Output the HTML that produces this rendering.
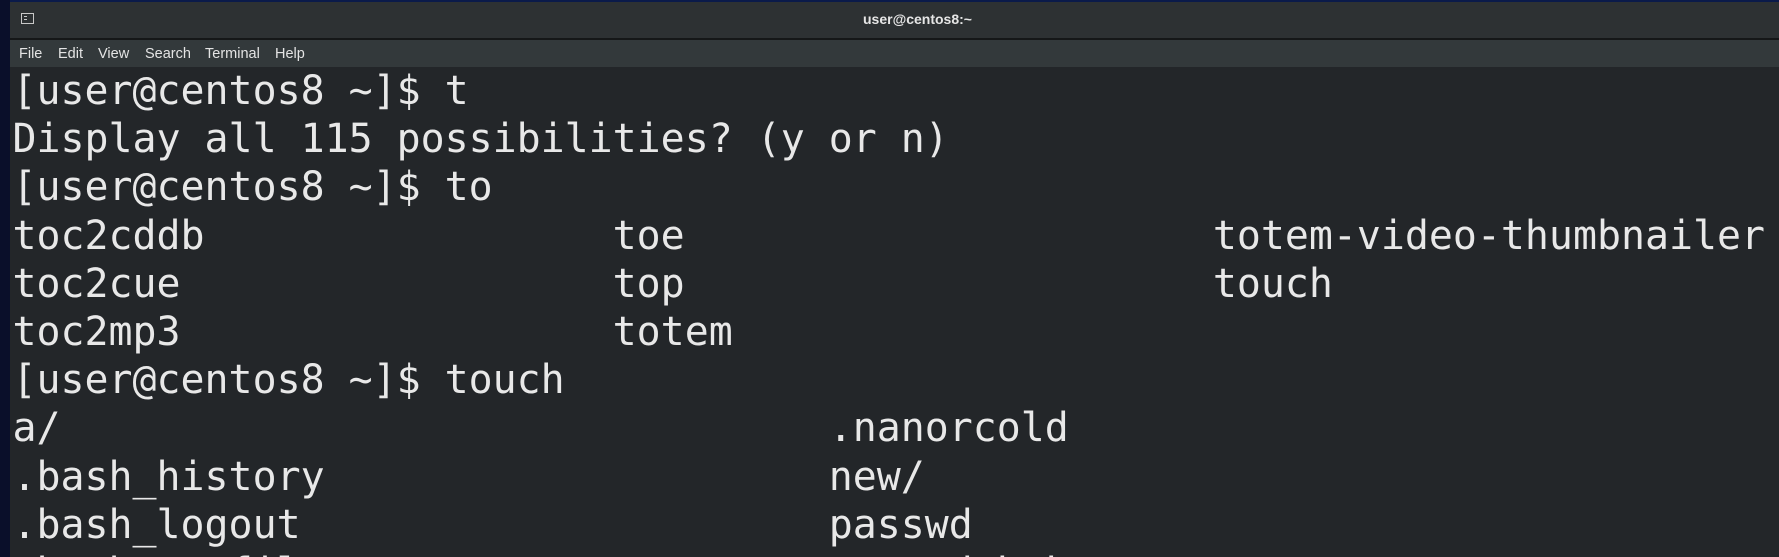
<!DOCTYPE html>
<html><head><meta charset="utf-8"><style>
html,body{margin:0;padding:0;width:1779px;height:557px;overflow:hidden;background:#232629;}
.strip{position:absolute;left:0;top:0;height:557px;width:10px;background:#0a0f2a;}
.topstrip{position:absolute;left:0;top:0;width:1779px;height:2px;background:#0a1a4a;}
.win{position:absolute;left:10px;top:2px;right:0;height:555px;background:#232629;overflow:hidden;}
.title{position:absolute;left:0;right:0;top:0;height:36px;background:#2d3133;border-bottom:2px solid #151718;}
.title .t{position:absolute;left:42px;right:0;top:9px;text-align:center;font:bold 14px "Liberation Sans",sans-serif;color:#e6e6e6;padding-left:4px;}
.icon{position:absolute;left:11px;top:11px;width:13px;height:11px;border:1px solid #c8c8c8;box-sizing:border-box;}
.icon:after{content:"";position:absolute;left:2px;top:2px;width:3px;height:1px;background:#c8c8c8;box-shadow:0 3px 0 #c8c8c8;}
.menu{position:absolute;left:0;right:0;top:38px;height:27px;background:#33393b;font:14.5px "Liberation Sans",sans-serif;color:#e4e4e4;}
.menu span{position:absolute;top:6px;}
.term{position:absolute;left:2.5px;top:65px;height:490px;overflow:hidden;font-family:"DejaVu Sans Mono",monospace;font-size:39.88px;line-height:48.2px;color:#e8e8e8;white-space:pre;}
</style></head><body>
<div class="topstrip"></div>
<div class="win">
<div class="title"><div class="icon"></div><div class="t">user@centos8:~</div></div>
<div class="menu"><span style="left:9px">File</span><span style="left:48px">Edit</span><span style="left:88px">View</span><span style="left:135px">Search</span><span style="left:195px">Terminal</span><span style="left:265px">Help</span></div>
<div class="term">[user@centos8 ~]$ t
Display all 115 possibilities? (y or n)
[user@centos8 ~]$ to
toc2cddb                 toe                      totem-video-thumbnailer
toc2cue                  top                      touch
toc2mp3                  totem
[user@centos8 ~]$ touch
a/                                .nanorcold
.bash_history                     new/
.bash_logout                      passwd
.bash_profile                     passwd.bak</div>
</div>
<div class="strip"></div>
</body></html>
